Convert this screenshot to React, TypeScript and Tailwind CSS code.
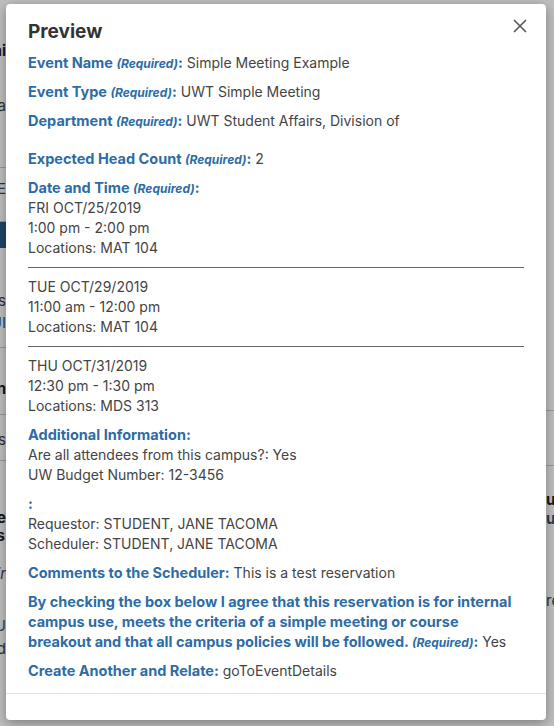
import React from "react"

const blue = "text-[#2d6ca5]"
const labelCls = "font-bold text-[14.5px] leading-none " + blue
const blockLabelCls = "font-bold text-[14.5px] leading-[20px] " + blue

function Req() {
  return <em className="text-[12px] font-bold italic leading-none">(Required)</em>
}

function Label({ text, req }: { text: string; req?: boolean }) {
  return (
    <span className={labelCls}>
      {text}
      {req && <> <Req /></>}:
    </span>
  )
}

function Field({ label, req, value, gap = "mb-[9px]" }: { label: string; req?: boolean; value?: string; gap?: string }) {
  return (
    <div className={gap}>
      <Label text={label} req={req} />
      {value && <span> {value}</span>}
    </div>
  )
}

const dates = [
  { day: "FRI OCT/25/2019", time: "1:00 pm - 2:00 pm", loc: "MAT 104" },
  { day: "TUE OCT/29/2019", time: "11:00 am - 12:00 pm", loc: "MAT 104" },
  { day: "THU OCT/31/2019", time: "12:30 pm - 1:30 pm", loc: "MDS 313" },
]

export default function App() {
  return (
    <div className="relative h-[726px] w-[554px] overflow-hidden bg-white font-['Inter',sans-serif] text-[#333]">
      {/* page behind the dialog */}
      <div className="flex h-full justify-between text-[15px] text-[#444]">
        <div className="flex w-[6px] flex-col items-end overflow-hidden whitespace-nowrap">
          <div className="mt-[40px] font-bold text-[#222]">Detai</div>
          <div className="mt-[32px]">Da</div>
          <div className="mt-[50px] h-px w-full bg-[#ccc]" />
          <div className="mt-[10px]">TBE</div>
          <div className="mt-[20px] h-px w-full bg-[#ccc]" />
          <div className="h-[26px] w-full bg-[#2a5c8a]" />
          <div className="mt-[42px]">ts</div>
          <div className="text-[#3a5f88]">UI</div>
          <div className="mt-[12px] h-px w-full bg-[#ccc]" />
          <div className="mt-[30px] font-bold text-[#222]">an</div>
          <div className="mt-[14px] h-px w-full bg-[#ccc]" />
          <div className="mt-[14px]">ts</div>
          <div className="mt-[8px] h-px w-full bg-[#ccc]" />
          <div className="mt-[48px] font-bold leading-[18px] text-[#222]">
            <div>the</div>
            <div>tes</div>
            <div>ee</div>
          </div>
          <div className="italic">fir</div>
          <div className="mt-[30px] text-[#3a5f88]">U</div>
          <div>nd</div>
        </div>
        <div className="flex w-[8px] flex-col overflow-hidden whitespace-nowrap">
          <div className="mt-[410px] h-px w-full bg-[#ccc]" />
          <div className="mt-[54px] h-px w-full bg-[#ccc]" />
          <div className="mt-[24px] font-bold leading-[19px] text-[#222]">
            <div>us</div>
            <div className="text-[#2a4f78]">us</div>
          </div>
          <div className="mt-[62px]">re</div>
        </div>
      </div>

      {/* overlay */}
      <div className="absolute inset-0 bg-black/25" />

      {/* dialog */}
      <div className="absolute left-[6px] top-[4px] w-[540px] rounded-[4px] bg-white shadow-[0_3px_12px_rgba(0,0,0,0.35)]">
        <div className="flex items-start justify-between pl-[22px] pr-[18px] pt-[16px]">
          <h2 className="text-[19px] font-bold leading-[24px] text-[#333]">Preview</h2>
          <button className="mt-[-2px] text-[#555]" aria-label="Close">
            <svg width="16" height="16" viewBox="0 0 16 16" fill="none" stroke="currentColor" strokeWidth="1.6">
              <path d="M2 2l12 12M14 2L2 14" />
            </svg>
          </button>
        </div>
        <div className="px-[22px] pt-[9px] pb-[1px] text-[14px] leading-[20px] text-[#444]">
          <Field label="Event Name" req value="Simple Meeting Example" />
          <Field label="Event Type" req value="UWT Simple Meeting" />
          <Field label="Department" req value="UWT Student Affairs, Division of" gap="mb-[18px]" />
          <Field label="Expected Head Count" req value="2" />
          <div className="mb-[9px]">
            <Field label="Date and Time" req gap="mb-0" />
            {dates.map((d, i) => (
              <div key={d.day}>
                {i > 0 && <hr className="mt-[9px] mb-[9px] border-t border-[#666]" />}
                <div>{d.day}</div>
                <div>{d.time}</div>
                <div>Locations: {d.loc}</div>
              </div>
            ))}
          </div>
          <div className="mb-[9px]">
            <div className={blockLabelCls}>Additional Information:</div>
            <div>Are all attendees from this campus?: Yes</div>
            <div>UW Budget Number: 12-3456</div>
          </div>
          <div className="mb-[9px]">
            <div className={blockLabelCls}>:</div>
            <div>Requestor: STUDENT, JANE TACOMA</div>
            <div>Scheduler: STUDENT, JANE TACOMA</div>
          </div>
          <Field label="Comments to the Scheduler" value="This is a test reservation" />
          <div className="mb-[9px]">
            <span className={labelCls}>
              By checking the box below I agree that this reservation is for internal campus use, meets the criteria of a simple meeting or course breakout and that all campus policies will be followed. <Req />:
            </span>
            <span> Yes</span>
          </div>
          <Field label="Create Another and Relate" value="goToEventDetails" />
        </div>
        <div className="mt-[2px] h-[27px] border-t border-[#e2e2e2]" />
      </div>
    </div>
  )
}
